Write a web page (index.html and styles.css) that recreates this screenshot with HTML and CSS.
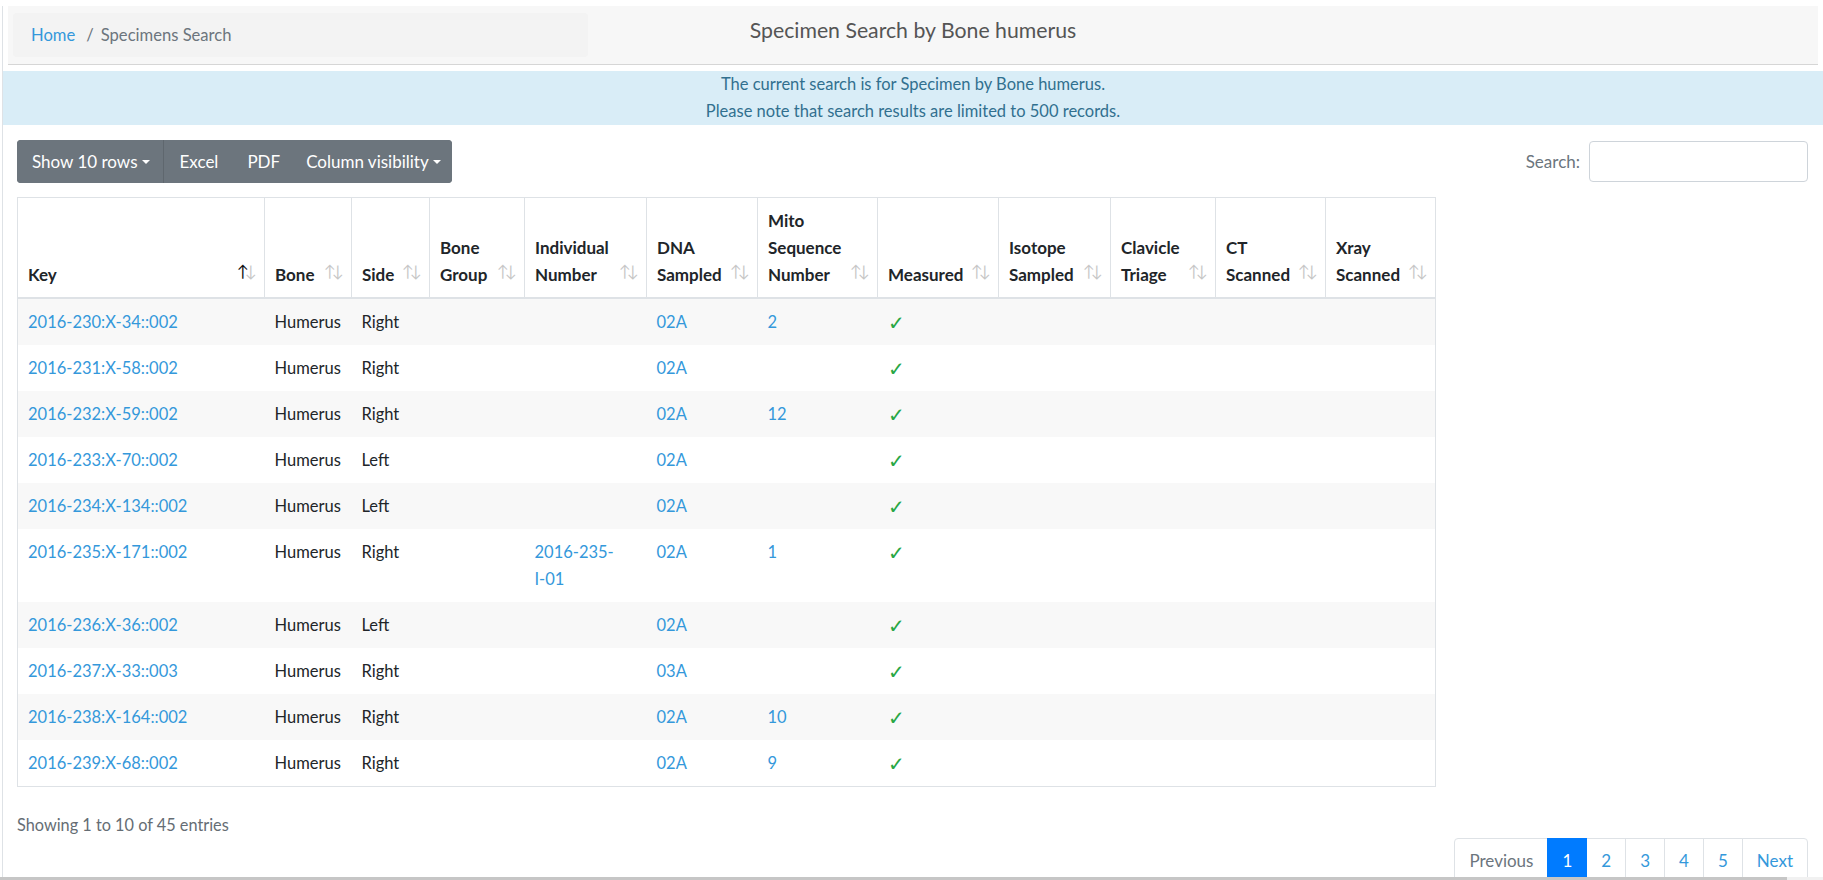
FILE: index.html
```html
<!DOCTYPE html>
<html lang="en">
<head>
<meta charset="utf-8">
<title>Specimen Search by Bone humerus</title>
<link rel="stylesheet" href="styles.css">
</head>
<body>
<div class="page">
  <header class="topbar">
    <div class="topbar-left">
      <ol class="crumbs">
        <li class="crumb"><a href="#">Home</a></li>
        <li class="crumb crumb-active">Specimens Search</li>
      </ol>
    </div>
    <h1 class="title">Specimen Search by Bone humerus</h1>
    <div class="topbar-right"></div>
  </header>

  <div class="notice">
    <p>The current search is for Specimen by Bone humerus.</p>
    <p>Please note that search results are limited to 500 records.</p>
  </div>

  <main class="content">
    <div class="toolbar">
      <div class="btn-group">
        <button class="btn btn-split">Show 10 rows<span class="caret"></span></button>
        <button class="btn btn-wide">Excel</button>
        <button class="btn">PDF</button>
        <button class="btn btn-last">Column visibility<span class="caret"></span></button>
      </div>
      <label class="search">Search:<input class="search-input" type="search"></label>
    </div>

    <table class="grid">
      <colgroup>
        <col class="c-key"><col class="c-bone"><col class="c-side"><col class="c-group"><col class="c-indiv"><col class="c-dna"><col class="c-mito"><col class="c-meas"><col class="c-iso"><col class="c-clav"><col class="c-ct"><col class="c-xray">
      </colgroup>
      <thead>
        <tr>
          <th class="sort sort-asc">Key</th>
          <th class="sort">Bone</th>
          <th class="sort">Side</th>
          <th class="sort">Bone Group</th>
          <th class="sort">Individual Number</th>
          <th class="sort">DNA Sampled</th>
          <th class="sort">Mito Sequence Number</th>
          <th class="sort">Measured</th>
          <th class="sort">Isotope Sampled</th>
          <th class="sort">Clavicle Triage</th>
          <th class="sort">CT Scanned</th>
          <th class="sort">Xray Scanned</th>
        </tr>
      </thead>
      <tbody>
        <tr><td><a href="#">2016-230:X-34::002</a></td><td>Humerus</td><td>Right</td><td></td><td></td><td><a href="#">02A</a></td><td><a href="#">2</a></td><td><span class="ok">✓</span></td><td></td><td></td><td></td><td></td></tr>
        <tr><td><a href="#">2016-231:X-58::002</a></td><td>Humerus</td><td>Right</td><td></td><td></td><td><a href="#">02A</a></td><td></td><td><span class="ok">✓</span></td><td></td><td></td><td></td><td></td></tr>
        <tr><td><a href="#">2016-232:X-59::002</a></td><td>Humerus</td><td>Right</td><td></td><td></td><td><a href="#">02A</a></td><td><a href="#">12</a></td><td><span class="ok">✓</span></td><td></td><td></td><td></td><td></td></tr>
        <tr><td><a href="#">2016-233:X-70::002</a></td><td>Humerus</td><td>Left</td><td></td><td></td><td><a href="#">02A</a></td><td></td><td><span class="ok">✓</span></td><td></td><td></td><td></td><td></td></tr>
        <tr><td><a href="#">2016-234:X-134::002</a></td><td>Humerus</td><td>Left</td><td></td><td></td><td><a href="#">02A</a></td><td></td><td><span class="ok">✓</span></td><td></td><td></td><td></td><td></td></tr>
        <tr><td><a href="#">2016-235:X-171::002</a></td><td>Humerus</td><td>Right</td><td></td><td><a href="#">2016-235-<span class="nobr">I-01</span></a></td><td><a href="#">02A</a></td><td><a href="#">1</a></td><td><span class="ok">✓</span></td><td></td><td></td><td></td><td></td></tr>
        <tr><td><a href="#">2016-236:X-36::002</a></td><td>Humerus</td><td>Left</td><td></td><td></td><td><a href="#">02A</a></td><td></td><td><span class="ok">✓</span></td><td></td><td></td><td></td><td></td></tr>
        <tr><td><a href="#">2016-237:X-33::003</a></td><td>Humerus</td><td>Right</td><td></td><td></td><td><a href="#">03A</a></td><td></td><td><span class="ok">✓</span></td><td></td><td></td><td></td><td></td></tr>
        <tr><td><a href="#">2016-238:X-164::002</a></td><td>Humerus</td><td>Right</td><td></td><td></td><td><a href="#">02A</a></td><td><a href="#">10</a></td><td><span class="ok">✓</span></td><td></td><td></td><td></td><td></td></tr>
        <tr><td><a href="#">2016-239:X-68::002</a></td><td>Humerus</td><td>Right</td><td></td><td></td><td><a href="#">02A</a></td><td><a href="#">9</a></td><td><span class="ok">✓</span></td><td></td><td></td><td></td><td></td></tr>
      </tbody>
    </table>

    <div class="info">Showing 1 to 10 of 45 entries</div>
    <div class="pager-row">
      <ul class="pager">
        <li class="pg pg-disabled"><span class="pg-link">Previous</span></li>
        <li class="pg pg-active"><a class="pg-link" href="#">1</a></li>
        <li class="pg"><a class="pg-link" href="#">2</a></li>
        <li class="pg"><a class="pg-link" href="#">3</a></li>
        <li class="pg"><a class="pg-link" href="#">4</a></li>
        <li class="pg"><a class="pg-link" href="#">5</a></li>
        <li class="pg"><a class="pg-link" href="#">Next</a></li>
      </ul>
    </div>
  </main>
</div>
<div class="hscroll"><div class="hscroll-thumb"></div></div>
</body>
</html>
```

FILE: styles.css
```css
html, body {
  margin: 0;
  padding: 0;
  overflow: hidden;
  height: 880px;
}
body {
  font-family: "Lato", "Noto Sans", sans-serif;
  font-size: 17px;
  color: #212529;
  background: #fff;
}
a {
  color: #3498db;
  text-decoration: none;
}
.page {
  margin-left: 2px;
  border-left: 1px solid #dee2e6;
  min-height: 880px;
  box-sizing: border-box;
}

/* header */
.topbar {
  margin: 6px 5px 0 5px;
  height: 58px;
  background: #f7f7f7;
  border-bottom: 1px solid #d6d6d6;
  display: grid;
  grid-template-columns: 1fr 1fr 1fr;
}
.crumbs {
  list-style: none;
  margin: 7px 0 0 5px;
  width: 575px;
  height: 44px;
  box-sizing: border-box;
  padding: 9px 18px;
  line-height: 26px;
  font-size: 16.6px;
  background: #f3f3f3;
  border-radius: 4px;
  display: flex;
}
.crumb-active {
  color: #6c757d;
}
.crumb + .crumb::before {
  content: "/";
  color: #6c757d;
  padding: 0 7px 0 11px;
}
.title {
  margin: 12px 0 0;
  font-size: 21.25px;
  line-height: 24px;
  font-weight: 400;
  color: #555;
  text-align: center;
}

/* notice */
.notice {
  margin-top: 6px;
  background: #d9edf7;
  color: #31708f;
  text-align: center;
  line-height: 27px;
  font-size: 16.5px;
}
.notice p {
  margin: 0;
}

/* content */
.content {
  padding: 15px 15px 0 14px;
}
.toolbar {
  display: flex;
  justify-content: space-between;
  align-items: center;
}
.btn-group {
  display: flex;
  background: #6c757d;
  border-radius: 4px;
  overflow: hidden;
}
.btn {
  font-family: inherit;
  font-size: 17px;
  color: #fff;
  background: #6c757d;
  border: 0;
  padding: 8.75px 13px;
  line-height: 25.5px;
  margin: 0;
}
.btn-split {
  padding-left: 15px;
  border-right: 1px solid #5f676e;
}
.btn-wide {
  padding: 8.75px 16px;
}
.btn-last {
  padding-right: 11px;
}
.caret {
  display: inline-block;
  margin-left: 4px;
  vertical-align: 4px;
  border-top: 4.5px solid;
  border-right: 4.5px solid transparent;
  border-left: 4.5px solid transparent;
}
.search {
  display: flex;
  align-items: center;
  color: #6c757d;
}
.search-input {
  margin-left: 9px;
  width: 219px;
  height: 41px;
  box-sizing: border-box;
  border: 1px solid #ced4da;
  border-radius: 4px;
  font-family: inherit;
  font-size: 17px;
}

/* table */
.grid {
  margin-top: 14px;
  width: 1418px;
  table-layout: fixed;
  border-collapse: collapse;
  border: 1px solid #dee2e6;
}
.c-key { width: 247px; }
.c-bone { width: 87px; }
.c-side { width: 78px; }
.c-group { width: 95px; }
.c-indiv { width: 122px; }
.c-dna { width: 111px; }
.c-mito { width: 120px; }
.c-meas { width: 121px; }
.c-iso { width: 112px; }
.c-clav { width: 105px; }
.c-ct { width: 110px; }
.c-xray { width: 110px; }

.grid th {
  position: relative;
  text-align: left;
  vertical-align: bottom;
  font-weight: 700;
  line-height: 27px;
  padding: 9px 30px 9px 10px;
  border-left: 1px solid #dee2e6;
  border-right: 1px solid #dee2e6;
  border-bottom: 2px solid #dee2e6;
}
.sort::before,
.sort::after {
  position: absolute;
  bottom: 18px;
  line-height: 17px;
  font-size: 16px;
  color: #000;
  opacity: 0.22;
  font-weight: 400;
}
.sort::before {
  content: "\2191";
  right: 15px;
}
.sort::after {
  content: "\2193";
  right: 7px;
}
.sort-asc::before {
  opacity: 0.95;
}
.grid td {
  vertical-align: top;
  line-height: 27px;
  padding: 9.5px 10px;
  font-size: 16.5px;
}
.grid tbody tr:nth-child(odd) {
  background: #f8f8f8;
}
.nobr {
  white-space: nowrap;
}
.ok {
  color: #28a745;
  font-size: 20px;
  line-height: 0;
  vertical-align: -2px;
}

/* footer */
.info {
  margin-top: 24px;
  line-height: 27px;
  font-size: 16.3px;
  color: #656d74;
}
.pager-row {
  display: flex;
  justify-content: flex-end;
}
.pager {
  list-style: none;
  margin: 0;
  padding: 0;
  display: flex;
}
.pg-link {
  display: block;
  padding: 8.5px 14px;
  line-height: 25px;
  border: 1px solid #dee2e6;
  margin-left: -1px;
  background: #fff;
  color: #3498db;
}
.pg:first-child .pg-link {
  margin-left: 0;
  border-radius: 4px 0 0 4px;
}
.pg:last-child .pg-link {
  border-radius: 0 4px 4px 0;
}
.pg-disabled .pg-link {
  color: #6c757d;
}
.pg-active .pg-link {
  background: #007bff;
  border-color: #007bff;
  color: #fff;
  position: relative;
}

/* horizontal scrollbar strip */
.hscroll {
  position: fixed;
  left: 0;
  right: 0;
  bottom: 0;
  height: 3px;
  background: #f1f1f1;
}
.hscroll-thumb {
  width: 1787px;
  height: 3px;
  background: #c6c6c6;
}
```
